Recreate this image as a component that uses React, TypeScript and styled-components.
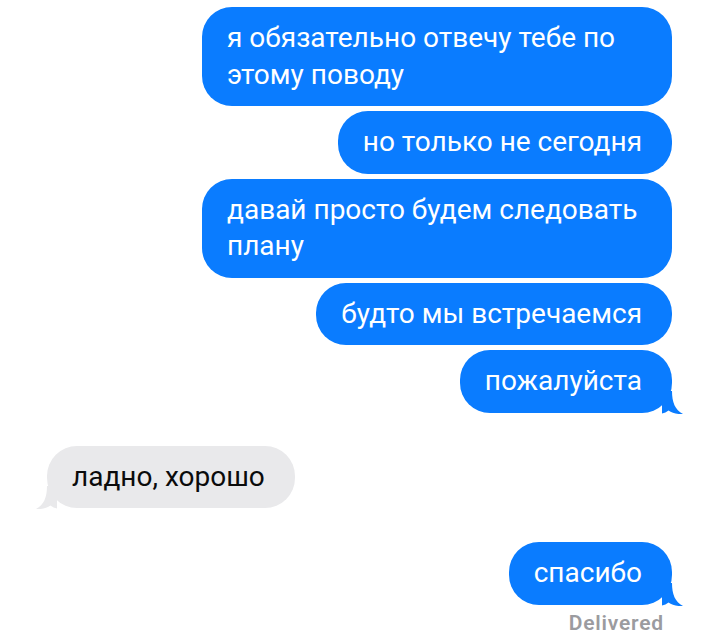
import styled, { createGlobalStyle } from "styled-components"

const GlobalStyle = createGlobalStyle`
  html, body {
    margin: 0;
    padding: 0;
    background: #fff;
  }
  body {
    font-family: "Roboto", "Liberation Sans", sans-serif;
    -webkit-font-smoothing: antialiased;
  }
`

const Thread = styled.div`
  width: 720px;
  height: 636px;
  box-sizing: border-box;
  padding: 7px 48px 0 40px;
  display: flex;
  flex-direction: column;
  overflow: hidden;
`

const Group = styled.div<{ $side: "out" | "in"; $top?: number }>`
  display: flex;
  flex-direction: column;
  align-items: ${({ $side }) => ($side === "out" ? "flex-end" : "flex-start")};
  gap: 5px;
  margin-top: ${({ $top }) => $top ?? 0}px;
  padding-left: ${({ $side }) => ($side === "in" ? "7px" : "0")};
`

const Bubble = styled.div<{ $side: "out" | "in" }>`
  position: relative;
  box-sizing: border-box;
  max-width: 470px;
  padding: 13px 30px 13px 25px;
  border-radius: 30px;
  font-size: 28px;
  line-height: 36.5px;
  background: ${({ $side }) => ($side === "out" ? "#0a7cff" : "#e9e9eb")};
  color: ${({ $side }) => ($side === "out" ? "#fff" : "#0b0b0b")};
  svg {
    position: absolute;
    bottom: -1px;
    width: 21px;
    height: 23px;
    ${({ $side }) => ($side === "out" ? "right: -11px;" : "left: -11px; transform: scaleX(-1);")}
    fill: ${({ $side }) => ($side === "out" ? "#0a7cff" : "#e9e9eb")};
  }
`

const Status = styled.div`
  margin-top: 2px;
  margin-right: 8px;
  font-size: 21px;
  line-height: 22px;
  font-weight: 600;
  color: #9b9b9f;
  letter-spacing: 0.8px;
`

function Tail() {
  return (
    <svg viewBox="0 0 21 23">
      <path d="M0 0 L10 0 C10 11 13 19 21 23 C15 23.5 10 22 6.5 19.5 C4.5 21 2.5 22 0 22.5 Z" />
    </svg>
  )
}

type Msg = { text: string; tail?: boolean }

const outFirst: Msg[] = [
  { text: "я обязательно отвечу тебе по этому поводу" },
  { text: "но только не сегодня" },
  { text: "давай просто будем следовать плану" },
  { text: "будто мы встречаемся" },
  { text: "пожалуйста", tail: true },
]

export default function App() {
  return (
    <>
      <GlobalStyle />
      <Thread>
        <Group $side="out">
          {outFirst.map((m) => (
            <Bubble key={m.text} $side="out">
              {m.text}
              {m.tail && <Tail />}
            </Bubble>
          ))}
        </Group>
        <Group $side="in" $top={33}>
          <Bubble $side="in">
            ладно, хорошо
            <Tail />
          </Bubble>
        </Group>
        <Group $side="out" $top={34}>
          <Bubble $side="out">
            спасибо
            <Tail />
          </Bubble>
          <Status>Delivered</Status>
        </Group>
      </Thread>
    </>
  )
}
